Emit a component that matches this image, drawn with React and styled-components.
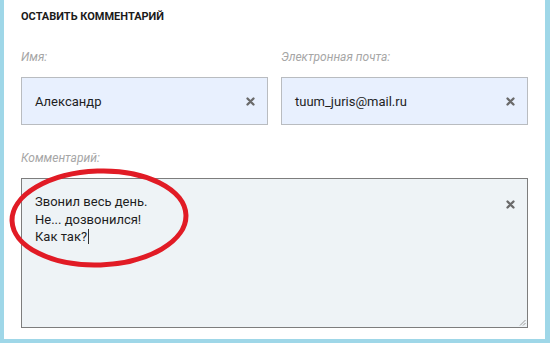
import React from 'react';
import styled, { createGlobalStyle } from 'styled-components';

const GlobalStyle = createGlobalStyle`
  html, body {
    margin: 0;
    padding: 0;
    background: #fff;
  }
  * {
    box-sizing: border-box;
  }
`;

const Frame = styled.div`
  position: relative;
  width: 550px;
  height: 343px;
  background: #fff;
  border-left: 4px solid #9fd7e8;
  border-right: 5px solid #9fd7e8;
  border-bottom: 4px solid #9fd7e8;
  padding: 10px 17px 0 17px;
  font-family: Roboto, "Liberation Sans", sans-serif;
  color: #222;
`;

const Title = styled.h3`
  margin: 0;
  font-size: 11px;
  line-height: 14px;
  font-weight: 700;
  text-transform: uppercase;
  color: #1b1b1b;
`;

const Row = styled.div`
  display: grid;
  grid-template-columns: 247px 247px;
  column-gap: 13px;
`;

const Field = styled.div`
  display: flex;
  flex-direction: column;
`;

const Label = styled.label`
  display: block;
  margin: 26px 0 12px;
  font-size: 12px;
  line-height: 15px;
  font-style: italic;
  color: #a6a6a6;
`;

const Input = styled.div`
  height: 48px;
  display: flex;
  align-items: center;
  justify-content: space-between;
  padding: 0 12px 0 13px;
  background: #e8f0fe;
  border: 1px solid #b9bcc0;
  font-size: 13px;
  color: #1e1e1e;
`;

const TextArea = styled.div`
  position: relative;
  height: 150px;
  display: flex;
  justify-content: space-between;
  align-items: flex-start;
  padding: 14px 12px 0 13px;
  background: #eef3f6;
  border: 1px solid #7d7d7d;
  font-size: 13px;
  line-height: 17.5px;
  color: #1e1e1e;
`;

const Lines = styled.div`
  white-space: pre-line;
`;

const Caret = styled.span`
  display: inline-block;
  width: 1px;
  height: 15px;
  margin-left: 1px;
  vertical-align: -3px;
  background: #333;
`;

const ClearButton = styled.span`
  display: flex;
  width: 9px;
  height: 9px;
  margin-top: ${(p) => (p.$top ? '7px' : '0')};
`;

const Grip = styled.svg`
  position: absolute;
  right: 1px;
  bottom: 1px;
`;

const Circle = styled.svg`
  position: absolute;
  left: 2px;
  top: 166px;
  pointer-events: none;
`;

function ClearIcon({ top }) {
  return (
    <ClearButton $top={top}>
      <svg width="9" height="9" viewBox="0 0 9 9">
        <path d="M1.5 1.5 L7.5 7.5 M7.5 1.5 L1.5 7.5" stroke="#6a6a6a" strokeWidth="2.3" strokeLinecap="round" />
      </svg>
    </ClearButton>
  );
}

export default function App() {
  return (
    <>
      <GlobalStyle />
      <Frame>
        <Title>Оставить комментарий</Title>
        <Row>
          <Field>
            <Label>Имя:</Label>
            <Input>
              <span>Александр</span>
              <ClearIcon />
            </Input>
          </Field>
          <Field>
            <Label>Электронная почта:</Label>
            <Input>
              <span>tuum_juris@mail.ru</span>
              <ClearIcon />
            </Input>
          </Field>
        </Row>
        <Field>
          <Label>Комментарий:</Label>
          <TextArea>
            <Lines>
              {'Звонил весь день.\nНе... дозвонился!\nКак так?'}
              <Caret />
            </Lines>
            <ClearIcon top />
            <Grip width="7" height="7" viewBox="0 0 7 7">
              <path d="M6.5 1 L1 6.5 M6.5 4 L4 6.5" stroke="#9a9a9a" strokeWidth="1" />
            </Grip>
          </TextArea>
        </Field>
        <Circle width="186" height="106" viewBox="0 0 186 106">
          <ellipse cx="93" cy="52" rx="87" ry="47" fill="none" stroke="#e11b25" strokeWidth="5" transform="rotate(-2 93 52)" />
        </Circle>
      </Frame>
    </>
  );
}
